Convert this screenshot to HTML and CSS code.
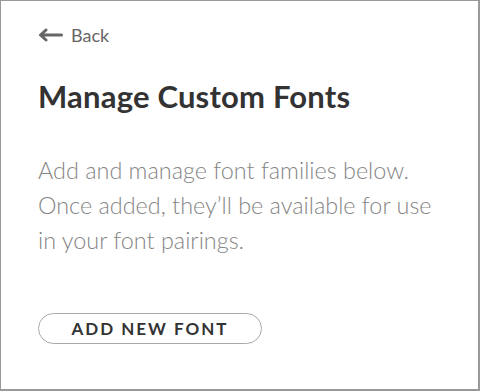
FILE: index.html
```html
<!DOCTYPE html>
<html lang="en">

<head>
    <meta charset="UTF-8">
    <meta name="viewport" content="width=device-width, initial-scale=1.0">
    <title>Manage Custom Fonts</title>
    <link rel="stylesheet" href="styles.css">
</head>

<body>

    <div class="panel">
        <!-- Back link -->
        <a class="back-link" href="#">
            <svg class="back-arrow" width="25" height="14" viewBox="0 0 25 14">
                <path d="M23.5 7H3M8 2L2.5 7l5.5 5" fill="none" stroke="#666" stroke-width="3" stroke-linecap="round" stroke-linejoin="round" />
            </svg>
            <span>Back</span>
        </a>

        <h1>Manage Custom Fonts</h1>

        <p class="intro">Add and manage font families below. Once added, they’ll be available for use in your font pairings.</p>

        <button class="btn-outline">ADD NEW FONT</button>
    </div>

</body>

</html>
```

FILE: styles.css
```css
* {
    margin: 0;
    padding: 0;
    box-sizing: border-box;
    font-family: 'Lato', 'Open Sans', sans-serif;
}

html,
body {
    width: 480px;
    height: 391px;
    background: #fff;
}

.panel {
    width: 480px;
    height: 391px;
    border: 1px solid #999;
    border-right-width: 2px;
    border-bottom-width: 2px;
    padding: 23px 37px 0 37px;
    display: flex;
    flex-direction: column;
    align-items: flex-start;
}

.back-link {
    display: flex;
    align-items: center;
    gap: 8px;
    color: #666;
    text-decoration: none;
    font-size: 18px;
    line-height: 22px;
}

h1 {
    margin-top: 31px;
    font-size: 31px;
    font-weight: 700;
    color: #333;
    line-height: 38px;
    letter-spacing: 0.2px;
}

.intro {
    margin-top: 38px;
    font-size: 23.4px;
    font-weight: 300;
    color: #858585;
    line-height: 35px;
    max-width: 405px;
}

.btn-outline {
    margin-top: 55px;
    width: 224px;
    height: 31px;
    border: 1px solid #aaa;
    border-radius: 16px;
    background: #fff;
    color: #333;
    font-size: 17px;
    font-weight: 700;
    letter-spacing: 2px;
    cursor: pointer;
}
```
